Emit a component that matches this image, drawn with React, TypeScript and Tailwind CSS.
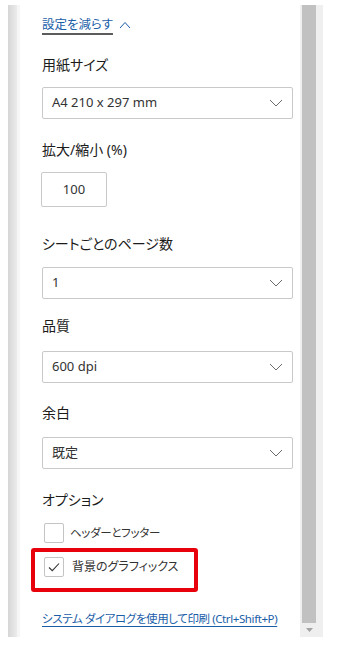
import React from 'react'

const font = "font-['Noto_Sans','Noto_Sans_CJK_JP',sans-serif] [font-feature-settings:'palt']"

function Chevron() {
    return (
        <svg width="14" height="8" viewBox="0 0 14 8" fill="none">
            <path d="M1 1l6 6 6-6" stroke="#6b6b6b" strokeWidth="1" />
        </svg>
    )
}

function Label({ text, className }: { text: string, className: string }) {
    return <div className={`text-[14px] leading-[22px] text-[#1b1b1b] ${className}`}>{text}</div>
}

function Select({ value, className }: { value: string, className: string }) {
    return (
        <div className={`w-[251px] h-[32px] border border-[#c9c9c9] rounded-[2px] bg-white flex items-center justify-between pl-[9px] pr-[9px] ${className}`}>
            <span className="text-[13px] text-[#333]">{value}</span>
            <Chevron />
        </div>
    )
}

function Checkbox({ checked }: { checked: boolean }) {
    return (
        <div className="w-[20px] h-[20px] shrink-0 border border-[#c4c4c4] rounded-[2px] bg-white flex items-center justify-center">
            {checked && (
                <svg width="12" height="10" viewBox="0 0 12 10" fill="none">
                    <path d="M1 5.5l3.3 3.2L11 1.5" stroke="#333" strokeWidth="1.1" />
                </svg>
            )}
        </div>
    )
}

export default function App() {
    return (
        <div className={`w-[338px] h-[647px] bg-white pt-[5px] ${font}`}>
            <div className="flex h-[632px] ml-[8px] w-[315px]">
                <div className="w-[9px] bg-gradient-to-r from-[#d6d6d6] to-[#ececec]" />
                <div className="w-[3px] bg-[#f6f6f6]" />

                <div className="flex-1 bg-white pl-[22px]">
                    <div className="mt-[10px] flex items-center gap-[6px] leading-[20px]">
                        <span className="text-[12.5px] text-[#1a5ea8] underline decoration-[#5c5c5c] decoration-[2px] underline-offset-[4px]">設定を減らす</span>
                        <svg width="12" height="8" viewBox="0 0 12 8" fill="none">
                            <path d="M1 7l5-5.5L11 7" stroke="#1a5ea8" strokeWidth="1" />
                        </svg>
                    </div>

                    <Label text="用紙サイズ" className="mt-[19px]" />
                    <Select value="A4 210 x 297 mm" className="mt-[11px]" />

                    <Label text="拡大/縮小 (%)" className="mt-[20px]" />
                    <div className="mt-[11px] -ml-[1px] w-[66px] h-[35px] border border-[#c9c9c9] rounded-[2px] flex items-center justify-center text-[13px] text-[#333]">100</div>

                    <Label text="シートごとのページ数" className="mt-[26px]" />
                    <Select value="1" className="mt-[12px]" />

                    <Label text="品質" className="mt-[16px]" />
                    <Select value="600 dpi" className="mt-[14px]" />

                    <Label text="余白" className="mt-[19px]" />
                    <Select value="既定" className="mt-[13px]" />

                    <Label text="オプション" className="mt-[20px]" />

                    <div className="mt-[12px] ml-[2px] flex items-center gap-[6px]">
                        <Checkbox checked={false} />
                        <span className="text-[11.5px] tracking-[-0.3px] text-[#333] whitespace-nowrap">ヘッダーとフッター</span>
                    </div>

                    <div className="mt-[5px] -ml-[11px] w-[167px] h-[44px] border-[4px] border-[#e8000b] rounded-[3px] pl-[9px] pt-[5px] flex items-start gap-[8px]">
                        <Checkbox checked={true} />
                        <span className="text-[12px] leading-[20px] text-[#333] whitespace-nowrap">背景のグラフィックス</span>
                    </div>

                    <div className="mt-[15px] leading-[20px] whitespace-nowrap">
                        <span className="text-[11.5px] tracking-[-0.4px] text-[#1a5ea8] underline decoration-[#1a5ea8] underline-offset-[3px]">システム ダイアログを使用して印刷 (Ctrl+Shift+P)</span>
                    </div>
                </div>

                <div className="w-[23px] bg-[#efefef] flex flex-col pl-[2px] pr-[7px]">
                    <div className="h-[618px] bg-[#c1c1c1]" />
                    <div className="flex-1 flex items-center justify-center">
                        <svg width="7" height="4" viewBox="0 0 7 4">
                            <path d="M0 0h7L3.5 4z" fill="#a3a3a3" />
                        </svg>
                    </div>
                </div>
            </div>
        </div>
    )
}
